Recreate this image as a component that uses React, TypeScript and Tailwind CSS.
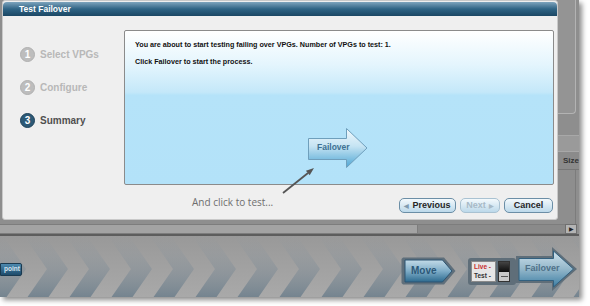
const sans = "font-['Liberation_Sans',Arial,sans-serif]"

function StepCircle({ n, active }: { n: number; active?: boolean }) {
  return (
    <div
      className={`w-[15px] h-[15px] rounded-full flex items-center justify-center text-white text-[10px] font-bold leading-none border ${
        active ? 'bg-[#2c5976] border-[#1d4159]' : 'bg-[#bdbdbd] border-[#b0b0b0]'
      }`}
    >
      {n}
    </div>
  )
}

function Step({ n, label, active }: { n: number; label: string; active?: boolean }) {
  return (
    <div className="flex items-center gap-[5px] h-[15px]">
      <StepCircle n={n} active={active} />
      <span className={`text-[10px] font-bold ${active ? 'text-[#505050]' : 'text-[#b8b8b8]'}`}>{label}</span>
    </div>
  )
}

function PanelArrow() {
  return (
    <div className="relative w-[62px] h-[42px]">
      <svg width="62" height="42" viewBox="0 0 62 42" className="absolute inset-0">
        <defs>
          <linearGradient id="pa" x1="0" y1="0" x2="0" y2="1">
            <stop offset="0" stopColor="#f2f9fd" />
            <stop offset="0.45" stopColor="#c6e4f3" />
            <stop offset="1" stopColor="#4ea6d4" />
          </linearGradient>
        </defs>
        <polygon
          points="1.5,11.5 39.5,11.5 39.5,1.5 60,21 39.5,40.5 39.5,32.5 1.5,32.5"
          fill="url(#pa)"
          stroke="#6f9fbc"
          strokeWidth="1"
        />
      </svg>
      <span className="absolute left-[10px] top-[16px] text-[8.5px] font-bold text-[#3f7193] leading-none">Failover</span>
    </div>
  )
}

function DlgButton({ children, w, disabled }: { children: React.ReactNode; w: string; disabled?: boolean }) {
  return (
    <div
      className={`${w} h-[15px] rounded-[5px] border flex items-center justify-center gap-[3px] text-[9px] font-bold leading-none bg-linear-to-b from-[#f4f9fc] to-[#bcd9ea] ${
        disabled ? 'border-[#a9c2d2] text-[#a8bac7]' : 'border-[#6b8ea6] text-[#262626]'
      }`}
    >
      {children}
    </div>
  )
}

function Dialog() {
  return (
    <div className="relative ml-[2px] w-[556px] h-[220px] bg-[#efefef] border border-[#c9c9c9] rounded-[3px] pt-[1px] flex flex-col">
      {/* title */}
      <div className="h-[14px] rounded-t-[4px] bg-linear-to-b from-[#7da4bd] via-[#2f6485] to-[#1b4764] flex items-center pl-[16px]">
        <span className="text-white text-[8.5px] font-bold leading-none">Test Failover</span>
      </div>

      <div className="flex flex-1">
        {/* steps */}
        <div className="w-[121px] pt-[31px] pl-[17px] flex flex-col gap-[18px]">
          <Step n={1} label="Select VPGs" />
          <Step n={2} label="Configure" />
          <Step n={3} label="Summary" active />
        </div>

        {/* content */}
        <div className="flex-1 pt-[14px] flex flex-col">
          <div className="w-[430px] h-[155px] border border-[#8b8b8b] rounded-[2px] bg-[linear-gradient(to_bottom,#ffffff_0%,#e4f5fd_22%,#c4e8f9_40%,#b5e3f9_42%,#b3e2f9_100%)] pl-[10px] pt-[10px] flex flex-col">
            <p className="text-[7.2px] font-bold text-[#111] leading-[8px]">
              You are about to start testing failing over VPGs. Number of VPGs to test: 1.
            </p>
            <p className="mt-[9px] text-[7.2px] font-bold text-[#111] leading-[8px]">Click Failover to start the process.</p>
            <div className="ml-[172px] mt-[61px]">
              <PanelArrow />
            </div>
          </div>

          <div className="mt-[13px] flex items-start pr-[4px]">
            <span className="ml-[68px] -mt-[3px] text-[10px] text-[#6e6e6e] font-['Open_Sans',sans-serif]">
              And click to test...
            </span>
            <div className="ml-auto flex gap-[4px]">
              <DlgButton w="w-[57px]">
                <span className="text-[6px] text-[#7f9bb0]">◀</span>Previous
              </DlgButton>
              <DlgButton w="w-[40px]" disabled>
                Next<span className="text-[6px]">▶</span>
              </DlgButton>
              <DlgButton w="w-[49px]">Cancel</DlgButton>
            </div>
          </div>
        </div>
      </div>

      {/* annotation arrow */}
      <svg width="40" height="32" viewBox="0 0 40 32" className="absolute left-[277px] top-[164px]">
        <line x1="3" y1="28" x2="28" y2="8" stroke="#555" strokeWidth="1.8" />
        <polygon points="34,3 29.7,10.3 25.9,5.7" fill="#555" />
      </svg>
    </div>
  )
}

function RightStrip() {
  return (
    <div className="flex-1 flex flex-col overflow-hidden">
      <div className="h-[114px] w-[18px] bg-[#949494] border-r border-b border-[#b3b3b3] rounded-br-[4px]" />
      <div className="h-[21px]" />
      <div className="h-[17px] bg-[#9a9a9a] border-y border-[#a8a8a8]" />
      <div className="h-[18px] bg-[#8b8b8b] border-b border-[#777] pl-[5px] flex items-center">
        <span className="text-[8px] font-bold text-[#333] whitespace-nowrap">Size</span>
      </div>
      <div className="flex-1 w-[18px] border-r border-[#7c7c7c]" />
    </div>
  )
}

function ScrollBar() {
  return (
    <div className="h-[10px] flex">
      <div className="w-[418px] bg-[#a3a3a3] border-y border-r border-[#7d7d7d]" />
      <div className="flex-1 bg-[#8a8a8a] border-y border-[#7d7d7d]" />
      <div className="w-[12px] bg-[#b4b4b4] border border-[#6f6f6f] flex items-center justify-center">
        <span className="text-[6px] text-[#222] leading-none">▶</span>
      </div>
      <div className="w-[2px]" />
    </div>
  )
}

function Chevrons() {
  const items = Array.from({ length: 15 }, (_, i) => -20 + i * 42)
  return (
    <svg width="579" height="61" viewBox="0 0 579 61" className="absolute inset-0">
      <defs>
        <linearGradient id="cv" x1="0" y1="0" x2="0" y2="61" gradientUnits="userSpaceOnUse">
          <stop offset="0" stopColor="#8e98a0" stopOpacity="0" />
          <stop offset="0.3" stopColor="#8a949c" stopOpacity="0.3" />
          <stop offset="1" stopColor="#72828e" stopOpacity="0.95" />
        </linearGradient>
      </defs>
      {items.map((x) => (
        <polygon
          key={x}
          points={`${x},-3 ${x + 25},33 ${x},69 ${x + 21},69 ${x + 46},33 ${x + 21},-3`}
          fill="url(#cv)"
        />
      ))}
    </svg>
  )
}

function MoveButton() {
  return (
    <div className="relative w-[55px] h-[28px]">
      <svg width="55" height="28" viewBox="0 0 55 28" className="absolute inset-0">
        <defs>
          <linearGradient id="mv" x1="0" y1="0" x2="0" y2="1">
            <stop offset="0" stopColor="#c3dbe8" />
            <stop offset="0.5" stopColor="#7fadc8" />
            <stop offset="1" stopColor="#2c6a8f" />
          </linearGradient>
        </defs>
        <polygon points="2,0.5 43,0.5 54.5,14 43,27.5 2,27.5 0.5,26 0.5,2" fill="#5f6f7b" />
        <polygon points="4,3 41.5,3 51,14 41.5,25 4,25" fill="url(#mv)" stroke="#2d5573" strokeWidth="1" />
      </svg>
      <span className="absolute left-[10px] top-[9px] text-[10px] font-bold text-[#2c5878] leading-none">Move</span>
    </div>
  )
}

function LiveTest() {
  return (
    <div className="w-[48px] h-[27px] rounded-[3px] bg-[#5f6e79] p-[3px] flex gap-[2px]">
      <div className="w-[25px] bg-[#e6e6e6] border border-[#8a8a8a] flex flex-col justify-center pl-[2px] gap-[2px]">
        <span className="text-[6.5px] font-bold text-[#c62d2d] leading-none">Live -</span>
        <span className="text-[6.5px] font-bold text-[#333] leading-none">Test -</span>
      </div>
      <div className="w-[12px] flex flex-col border border-[#333]">
        <div className="flex-1 bg-linear-to-b from-[#444] to-[#0d0d0d]" />
        <div className="flex-1 bg-[#c8c8c8] flex items-center justify-center">
          <div className="w-[7px] h-[1px] bg-[#555]" />
        </div>
      </div>
    </div>
  )
}

function FailoverBig() {
  return (
    <div className="relative w-[61px] h-[44px]">
      <svg width="61" height="44" viewBox="0 0 61 44" className="absolute inset-0">
        <defs>
          <linearGradient id="fb" x1="0" y1="0" x2="0" y2="1">
            <stop offset="0" stopColor="#d0e3ed" />
            <stop offset="0.5" stopColor="#94b7ca" />
            <stop offset="1" stopColor="#3c7ea4" />
          </linearGradient>
        </defs>
        <polygon points="0,9 36,9 36,0 61,22 36,44 36,36 0,36" fill="#5f6e79" />
        <polygon
          points="3,11.5 37.5,11.5 37.5,4 57.5,22 37.5,40 37.5,33.5 3,33.5"
          fill="url(#fb)"
          stroke="#32607f"
          strokeWidth="1"
        />
      </svg>
      <span className="absolute left-[9px] top-[17px] text-[9px] font-bold text-[#4f7189] leading-none">Failover</span>
    </div>
  )
}

function BottomBar() {
  return (
    <div className="relative flex-1 bg-linear-to-b from-[#999999] to-[#a9a9a9] overflow-hidden">
      <Chevrons />
      <div className="relative flex items-start h-full">
        <div className="mt-[27px] w-[22px] h-[13px] rounded-r-[2px] bg-linear-to-b from-[#4d8ab0] to-[#1d4b6b] border border-[#1a3a50] flex items-center justify-end pr-[1px]">
          <span className="text-[6.5px] font-bold text-[#d8e8f2] leading-none">point</span>
        </div>
        <div className="ml-auto mt-[21px]">
          <MoveButton />
        </div>
        <div className="ml-[12px] mt-[22px]">
          <LiveTest />
        </div>
        <div className="mt-[11px] mr-[2px]">
          <FailoverBig />
        </div>
      </div>
    </div>
  )
}

export default function App() {
  return (
    <div className={`w-[590px] h-[306px] bg-white overflow-hidden ${sans}`}>
      <div className="w-[579px] h-[297px] bg-[#8e8e8e] flex flex-col shadow-[3px_3px_5px_rgba(0,0,0,0.45)]">
        <div className="flex h-[224px]">
          <Dialog />
          <RightStrip />
        </div>
        <ScrollBar />
        <div className="h-[2px] bg-[#5d5d5d]" />
        <BottomBar />
      </div>
    </div>
  )
}
